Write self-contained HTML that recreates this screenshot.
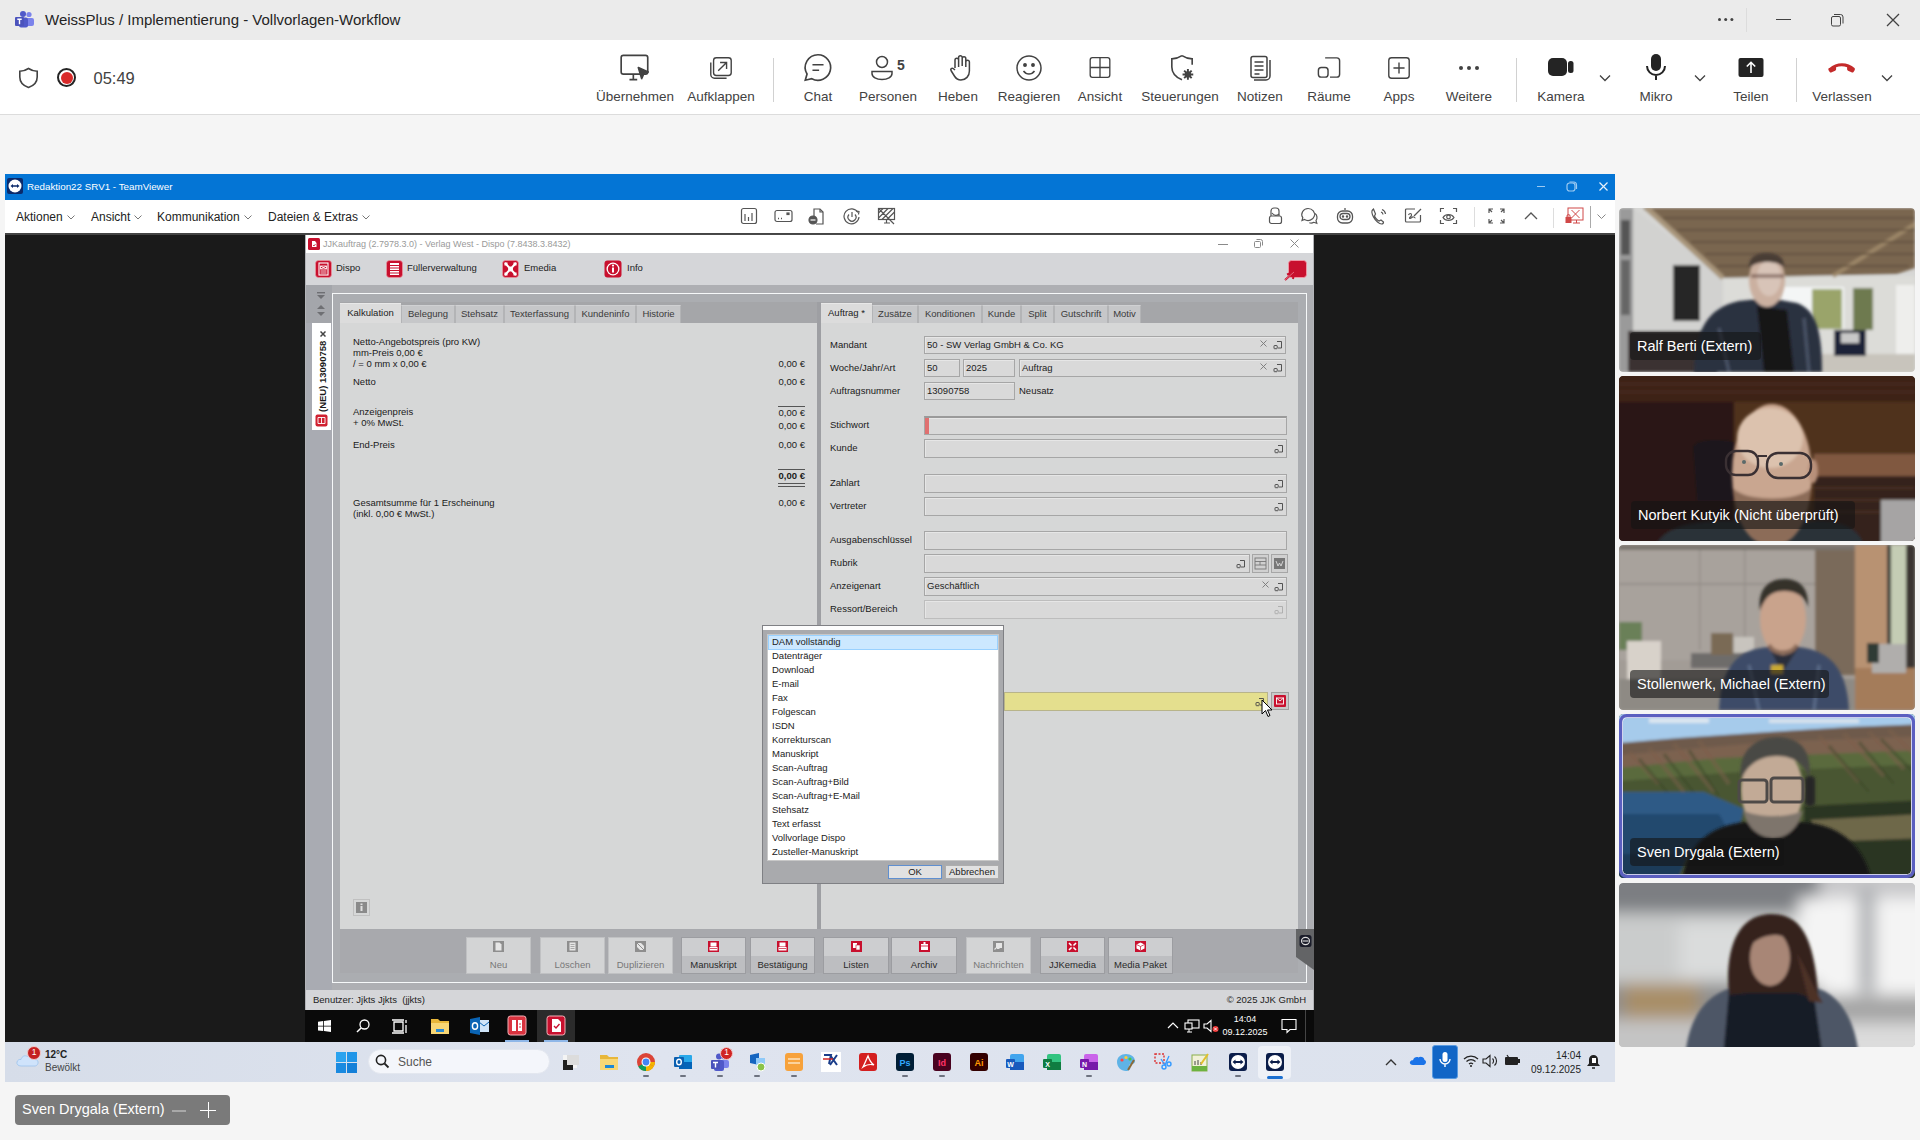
<!DOCTYPE html>
<html><head><meta charset="utf-8">
<style>
*{box-sizing:border-box;margin:0;padding:0}
html,body{width:1920px;height:1140px;overflow:hidden;background:#f5f5f5;font-family:"Liberation Sans",sans-serif;}
.a{position:absolute}
.tlab{position:absolute;top:88.5px;font-size:13.5px;color:#424242;white-space:nowrap;transform:translateX(-50%)}
.ticon{position:absolute;top:53px;width:28px;height:28px;transform:translateX(-50%)}
.ticon.big{top:52px;width:31px;height:31px}
.tsep{position:absolute;top:58px;width:1px;height:44px;background:#d1d1d1}
.tvm{top:210px;font-size:12px;color:#222;white-space:nowrap}
.at{white-space:nowrap;line-height:1.15}
.tname2{font-size:14.5px;color:#fff;white-space:nowrap;line-height:18px}
</style></head><body>
<!--TEAMS-->
<!-- TEAMS TITLE BAR -->
<div class="a" style="left:0;top:0;width:1920px;height:40px;background:#ebebeb"></div>
<svg class="a" style="left:15px;top:11px" width="20" height="18" viewBox="0 0 20 18">
 <circle cx="14" cy="3.5" r="2.6" fill="#7b83eb"/><rect x="11" y="7" width="8" height="8" rx="2" fill="#7b83eb"/>
 <circle cx="8" cy="3" r="3" fill="#5059c9"/><rect x="4" y="6.5" width="9" height="10" rx="2" fill="#5059c9"/>
 <rect x="0" y="6" width="9" height="9" rx="1" fill="#4b53bc"/><path d="M2.3 8.2h4.4M4.5 8.2v5" stroke="#fff" stroke-width="1.4"/>
</svg>
<div class="a" style="left:45px;top:11px;font-size:15px;color:#242424;white-space:nowrap">WeissPlus / Implementierung - Vollvorlagen-Workflow</div>
<div class="a" style="left:1717.5px;top:18px;width:3.2px;height:3.2px;border-radius:2px;background:#424242;box-shadow:6.2px 0 #424242,12.4px 0 #424242"></div>
<div class="a" style="left:1746px;top:8px;width:1px;height:24px;background:#dcdcdc"></div>
<div class="a" style="left:1776px;top:19px;width:15px;height:1px;background:#424242"></div>
<svg class="a" style="left:1831px;top:14px" width="13" height="13" viewBox="0 0 13 13"><rect x="0.5" y="2.5" width="9" height="9.5" rx="1.5" fill="none" stroke="#424242"/><path d="M3 0.5h6.5a2.5 2.5 0 0 1 2.5 2.5v6.5" fill="none" stroke="#424242"/></svg>
<svg class="a" style="left:1886px;top:13px" width="14" height="14" viewBox="0 0 14 14"><path d="M1 1L13 13M13 1L1 13" stroke="#424242" stroke-width="1.3"/></svg>

<!-- TEAMS TOOLBAR -->
<div class="a" style="left:0;top:40px;width:1920px;height:75px;background:#fff;border-bottom:1px solid #dcdcdc"></div>
<svg class="a" style="left:18px;top:67px" width="21" height="22" viewBox="0 0 21 22"><path d="M10.5 1.5C7.5 3.5 5 4.3 1.8 4.3V10c0 5.2 3.4 8.7 8.7 10.5 5.3-1.8 8.7-5.3 8.7-10.5V4.3C16 4.3 13.5 3.5 10.5 1.5z" fill="none" stroke="#424242" stroke-width="1.6"/></svg>
<div class="a" style="left:57px;top:68px;width:19px;height:19px;border-radius:50%;border:2px solid #242424"></div>
<div class="a" style="left:60.5px;top:71.5px;width:12px;height:12px;border-radius:50%;background:#d92a2a"></div>
<div class="a" style="left:93.5px;top:69px;font-size:16.5px;color:#424242">05:49</div>

<div class="tsep" style="left:773px"></div>
<div class="tsep" style="left:1516px"></div>
<div class="tsep" style="left:1796px"></div>

<svg class="ticon" style="left:635px;top:52.0px;width:31px;height:31px" viewBox="0 0 28 28" fill="none" stroke="#424242" stroke-width="1.5"><rect x="1.5" y="3" width="24" height="17" rx="2"/><path d="M9 25h7M12.5 20v5"/><path d="M17 14l9 4-4 1.5L20 24z" fill="#424242" stroke-linejoin="round"/></svg>
<svg class="ticon" style="left:721px;top:54.5px;width:26px;height:26px" viewBox="0 0 28 28" fill="none" stroke="#424242" stroke-width="1.5"><rect x="6" y="3" width="19" height="19" rx="3"/><path d="M3 8v13a4 4 0 0 0 4 4h13"/><path d="M11 17l9-9M13 8h7v7"/></svg>
<svg class="ticon" style="left:818px;top:52.0px;width:31px;height:31px" viewBox="0 0 28 28" fill="none" stroke="#424242" stroke-width="1.5"><path d="M14 2.5a11.5 11.5 0 1 1-5.6 21.6L2.5 25.5l1.6-5.6A11.5 11.5 0 0 1 14 2.5z"/><path d="M9 11.5h10M9 16.5h6"/></svg>
<svg class="ticon" style="left:882px;top:53.5px;width:28px;height:28px" viewBox="0 0 28 28" fill="none" stroke="#424242" stroke-width="1.5"><circle cx="14" cy="8" r="5.5"/><path d="M4 17.5h20v2c0 3.5-4.5 6-10 6s-10-2.5-10-6z"/></svg>
<div class="a" style="left:897px;top:57px;font-size:14px;font-weight:bold;color:#424242">5</div>
<svg class="ticon" style="left:960.5px;top:53.5px;width:28px;height:28px" viewBox="0 0 28 28" fill="none" stroke="#424242" stroke-width="1.5" stroke-linejoin="round"><path d="M8 14V6a1.8 1.8 0 0 1 3.6 0v7M11.6 12V3.5a1.8 1.8 0 0 1 3.6 0V12M15.2 12V4.5a1.8 1.8 0 0 1 3.6 0V13M18.8 13V8a1.8 1.8 0 0 1 3.6 0v9c0 5-3.5 9-8.5 9-3 0-5-1.5-6.5-4L4 16.5c-.8-1.3.8-3 2.2-2l1.8 1.5"/></svg>
<svg class="ticon" style="left:1029px;top:53.5px;width:28px;height:28px" viewBox="0 0 28 28" fill="none" stroke="#424242" stroke-width="1.5"><circle cx="14" cy="14" r="12"/><circle cx="10" cy="11" r="1.2" fill="#424242"/><circle cx="18" cy="11" r="1.2" fill="#424242"/><path d="M8.5 17c1.5 2 3.3 3 5.5 3s4-1 5.5-3"/></svg>
<svg class="ticon" style="left:1100px;top:55.0px;width:25px;height:25px" viewBox="0 0 28 28" fill="none" stroke="#424242" stroke-width="1.5"><rect x="3" y="3" width="22" height="22" rx="2.5"/><path d="M14 3v22M3 14h22"/></svg>
<svg class="ticon" style="left:1181.5px;top:52.5px;width:30px;height:30px" viewBox="0 0 28 28" fill="none" stroke="#424242" stroke-width="1.5"><path d="M14 2.5C11 4.5 8 5.5 4.5 5.5V13c0 5.5 3.5 9.5 9.5 12"/><path d="M14 2.5c3 2 6 3 9.5 3V11"/><circle cx="19.5" cy="20" r="2.2" fill="#424242"/><path d="M19.5 15v10M14.5 20h10M16 16.5l7 7M23 16.5l-7 7" stroke-width="1.8"/></svg>
<svg class="ticon" style="left:1260px;top:53.5px;width:28px;height:28px" viewBox="0 0 28 28" fill="none" stroke="#424242" stroke-width="1.5"><rect x="5" y="2.5" width="16" height="21" rx="2"/><path d="M8.5 8h9M8.5 12h9M8.5 16h9M8.5 20h5"/><path d="M24 6v16a4 4 0 0 1-4 4H8"/></svg>
<svg class="ticon" style="left:1329px;top:54.0px;width:27px;height:27px" viewBox="0 0 28 28" fill="none" stroke="#424242" stroke-width="1.5"><path d="M10 4h12a3 3 0 0 1 3 3v14a3 3 0 0 1-3 3h-7"/><rect x="3" y="14" width="10" height="10" rx="3"/></svg>
<svg class="ticon" style="left:1399px;top:54.5px;width:26px;height:26px" viewBox="0 0 28 28" fill="none" stroke="#424242" stroke-width="1.5"><rect x="3" y="3" width="22" height="22" rx="3"/><path d="M14 8v12M8 14h12"/></svg>
<div class="a" style="left:1459px;top:66px;width:4px;height:4px;border-radius:50%;background:#424242;box-shadow:8px 0 #424242,16px 0 #424242"></div>
<svg class="ticon" style="left:1561px" viewBox="0 0 28 28"><rect x="1" y="5" width="19" height="18" rx="5" fill="#242424"/><rect x="21" y="8" width="5.5" height="12" rx="2.5" fill="#242424"/></svg>
<svg class="a" style="left:1599px;top:74px" width="12" height="8" viewBox="0 0 12 8"><path d="M1 1.5l5 5 5-5" fill="none" stroke="#424242" stroke-width="1.3"/></svg>
<svg class="ticon" style="left:1656px" viewBox="0 0 28 28"><rect x="9" y="1" width="10" height="17" rx="5" fill="#242424"/><path d="M5 13a9 9 0 0 0 18 0M14 22v5" fill="none" stroke="#242424" stroke-width="2"/></svg>
<svg class="a" style="left:1694px;top:74px" width="12" height="8" viewBox="0 0 12 8"><path d="M1 1.5l5 5 5-5" fill="none" stroke="#424242" stroke-width="1.3"/></svg>
<svg class="ticon" style="left:1751px" viewBox="0 0 28 28"><rect x="1.5" y="5" width="25" height="19" rx="2" fill="#242424"/><path d="M14 20V9.5M9.8 13.5L14 9.3 18.2 13.5" fill="none" stroke="#fff" stroke-width="1.6"/></svg>
<svg class="ticon" style="left:1842px" viewBox="0 0 28 28"><path d="M1.5 15c6.5-6.5 18.5-6.5 25 0 .5.5.5 1.5 0 2.5l-1 1.5c-.5.6-1.3.7-2 .3l-3.5-1.6c-.6-.3-.9-.8-.9-1.4v-2c-3.5-1.3-7.5-1.3-11 0v2c0 .6-.3 1.1-.9 1.4L3.7 19.3c-.7.4-1.5.3-2-.3l-1-1.5c-.5-1-.5-2 .3-2.5z" fill="#c42b2b"/></svg>
<svg class="a" style="left:1881px;top:74px" width="12" height="8" viewBox="0 0 12 8"><path d="M1 1.5l5 5 5-5" fill="none" stroke="#424242" stroke-width="1.3"/></svg>

<div class="tlab" style="left:635px">Übernehmen</div>
<div class="tlab" style="left:721px">Aufklappen</div>
<div class="tlab" style="left:818px">Chat</div>
<div class="tlab" style="left:888px">Personen</div>
<div class="tlab" style="left:958px">Heben</div>
<div class="tlab" style="left:1029px">Reagieren</div>
<div class="tlab" style="left:1100px">Ansicht</div>
<div class="tlab" style="left:1180px">Steuerungen</div>
<div class="tlab" style="left:1260px">Notizen</div>
<div class="tlab" style="left:1329px">Räume</div>
<div class="tlab" style="left:1399px">Apps</div>
<div class="tlab" style="left:1469px">Weitere</div>
<div class="tlab" style="left:1561px">Kamera</div>
<div class="tlab" style="left:1656px">Mikro</div>
<div class="tlab" style="left:1751px">Teilen</div>
<div class="tlab" style="left:1842px">Verlassen</div>
<!--/TEAMS-->
<!--TV-->
<!-- TEAMVIEWER -->
<div class="a" style="left:5px;top:174px;width:1610px;height:868px;background:#1a1a1a"></div>
<div class="a" style="left:5px;top:174px;width:1610px;height:26px;background:#0475d5"></div>
<div class="a" style="left:7px;top:178px;width:16px;height:16px;background:#0b2a6b;border-radius:2px"></div>
<svg class="a" style="left:8px;top:179px" width="14" height="14" viewBox="0 0 14 14"><circle cx="7" cy="7" r="6.5" fill="#fff"/><path d="M2.5 7l2.5-2v1.2h4V5l2.5 2-2.5 2V7.8h-4V9z" fill="#0b2a6b"/></svg>
<div class="a" style="left:27px;top:180.5px;font-size:9.8px;color:#fff;white-space:nowrap">Redaktion22 SRV1 - TeamViewer</div>
<div class="a" style="left:1537px;top:186px;width:8px;height:1px;background:#9ccaf2"></div>
<svg class="a" style="left:1566px;top:181px" width="12" height="11" viewBox="0 0 12 11"><rect x="1" y="2" width="8" height="8" rx="2.5" fill="none" stroke="#9ccaf2" stroke-width="1.2"/><path d="M3.5 1h4a3 3 0 0 1 3 3v4" fill="none" stroke="#9ccaf2" stroke-width="1.2"/></svg>
<svg class="a" style="left:1599px;top:182px" width="9" height="9" viewBox="0 0 9 9"><path d="M0.5 0.5l8 8M8.5 0.5l-8 8" stroke="#e6f1fb" stroke-width="1.2"/></svg>

<div class="a" style="left:5px;top:200px;width:1610px;height:34px;background:#fff"></div>
<div class="a" style="left:5px;top:233px;width:1610px;height:2px;background:#444"></div>
<div class="a tvm" style="left:16px">Aktionen</div>
<div class="a tvm" style="left:91px">Ansicht</div>
<div class="a tvm" style="left:157px">Kommunikation</div>
<div class="a tvm" style="left:268px">Dateien &amp; Extras</div>
<svg class="a" style="left:67px;top:215px" width="8" height="5" viewBox="0 0 8 5"><path d="M0.5 0.5l3.5 3.5 3.5-3.5" fill="none" stroke="#777"/></svg>
<svg class="a" style="left:134px;top:215px" width="8" height="5" viewBox="0 0 8 5"><path d="M0.5 0.5l3.5 3.5 3.5-3.5" fill="none" stroke="#777"/></svg>
<svg class="a" style="left:244px;top:215px" width="8" height="5" viewBox="0 0 8 5"><path d="M0.5 0.5l3.5 3.5 3.5-3.5" fill="none" stroke="#777"/></svg>
<svg class="a" style="left:362px;top:215px" width="8" height="5" viewBox="0 0 8 5"><path d="M0.5 0.5l3.5 3.5 3.5-3.5" fill="none" stroke="#777"/></svg>

<svg class="a" style="left:740px;top:207px" width="18" height="18" viewBox="0 0 18 18" fill="none" stroke="#555" stroke-width="1.2"><rect x="1.5" y="1.5" width="15" height="15" rx="2"/><path d="M5 7v7M8.5 10v4M12 6v8"/></svg>
<svg class="a" style="left:774px;top:209px" width="19" height="14" viewBox="0 0 19 14" fill="none" stroke="#555" stroke-width="1.2"><rect x="1" y="1.5" width="17" height="11" rx="2"/><path d="M4 9.5h1M7 9.5h1" stroke-width="1.5"/><rect x="13" y="4" width="2" height="1.5" fill="#555"/></svg>
<svg class="a" style="left:807px;top:207px" width="18" height="18" viewBox="0 0 18 18" fill="none" stroke="#555" stroke-width="1.2"><path d="M7 10V2h6l3 3v12H9"/><path d="M13 2v3h3"/><circle cx="6" cy="13" r="4" fill="#555"/><path d="M3.5 13h5" stroke="#fff"/></svg>
<svg class="a" style="left:843px;top:207px" width="18" height="18" viewBox="0 0 18 18" fill="none" stroke="#555" stroke-width="1.2"><path d="M15 5.5A7.5 7.5 0 1 0 16 10"/><path d="M13 4l3 .5-.5 3"/><path d="M6 7.5a4 4 0 1 0 6 0M9 5v5"/></svg>
<svg class="a" style="left:877px;top:207px" width="19" height="18" viewBox="0 0 19 18" fill="none" stroke="#555" stroke-width="1.2"><rect x="1.5" y="1.5" width="16" height="11"/><path d="M1.5 6l4.5-4.5M1.5 11l9.5-9.5M5 12.5l11-11M10 12.5l7.5-7.5M2 2l15 15M7 16h6M9.5 12.5v3.5"/></svg>

<svg class="a" style="left:1268px;top:207px" width="15" height="18" viewBox="0 0 15 18" fill="none" stroke="#555" stroke-width="1.2"><path d="M3 9V4a3 3 0 0 1 3-3h2a3 3 0 0 1 3 3v5"/><rect x="1.5" y="9" width="12" height="7.5" rx="2"/><path d="M4 6c2 3 5 3 7 1"/></svg>
<svg class="a" style="left:1300px;top:207px" width="19" height="18" viewBox="0 0 19 18" fill="none" stroke="#555" stroke-width="1.2"><path d="M8 1.5a6.5 6 0 1 1-3.5 11L2 13.5l.8-2.8A6.5 6 0 0 1 8 1.5z"/><path d="M15 6.5a5 5 0 0 1 1 7l.8 2.8-3-1a5 5 0 0 1-4.5.5"/></svg>
<svg class="a" style="left:1336px;top:207px" width="18" height="18" viewBox="0 0 18 18" fill="none" stroke="#555" stroke-width="1.3"><rect x="1.5" y="4" width="15" height="12" rx="5"/><rect x="4" y="6.5" width="10" height="6" rx="3"/><path d="M9 1v2"/><circle cx="7" cy="9.5" r=".6" fill="#555"/><circle cx="11" cy="9.5" r=".6" fill="#555"/></svg>
<svg class="a" style="left:1370px;top:207px" width="18" height="18" viewBox="0 0 18 18" fill="none" stroke="#555" stroke-width="1.2"><path d="M2.5 3c-1 1-1 3 1 7s6 7 8 7c1 0 2-1 2-2l-2.5-2-2 1c-1.5-.5-4-3.5-4.5-5l1-2L3.5 2z"/><path d="M11 5a3 3 0 0 1 2 2.5M12 2.5a5.5 5.5 0 0 1 3.5 4.5"/></svg>
<svg class="a" style="left:1404px;top:207px" width="19" height="17" viewBox="0 0 19 17" fill="none" stroke="#555" stroke-width="1.2"><path d="M11 2H2.5a1 1 0 0 0-1 1v11a1 1 0 0 0 1 1h13a1 1 0 0 0 1-1V8"/><path d="M4.5 8c1-2 3-2 3 0s-2 2-2 3 2 0 3-1 2 1 3 1"/><path d="M10 9l7-7"/></svg>
<svg class="a" style="left:1439px;top:207px" width="19" height="18" viewBox="0 0 19 18" fill="none" stroke="#555" stroke-width="1.2"><path d="M1.5 5V1.5H5M14 1.5h3.5V5M1.5 13v3.5H5M14 16.5h3.5V13"/><path d="M4 10.5c2.5-4 8.5-4 11 0-2.5 4-8.5 4-11 0z"/><circle cx="9.5" cy="10" r="1.8"/></svg>
<div class="a" style="left:1474px;top:207px;width:1px;height:20px;background:#ddd"></div>
<svg class="a" style="left:1488px;top:208px" width="17" height="16" viewBox="0 0 17 16" fill="none" stroke="#555" stroke-width="1.2"><path d="M1 5V1h4M12 1h4v4M1 11v4h4M12 15h4v-4M1 1l3 3M16 1l-3 3M1 15l3-3M16 15l-3-3"/></svg>
<svg class="a" style="left:1524px;top:211px" width="14" height="9" viewBox="0 0 14 9"><path d="M1 8l6-6 6 6" fill="none" stroke="#555" stroke-width="1.3"/></svg>
<div class="a" style="left:1553px;top:208px;width:1px;height:20px;background:#ddd"></div>
<svg class="a" style="left:1565px;top:207px" width="19" height="19" viewBox="0 0 19 19" fill="none" stroke="#d04848" stroke-width="1"><rect x="3" y="1" width="15" height="12"/><path d="M6.5 3l8 8M14.5 3l-8 8M8 16h7M11.5 13v3"/><rect x="1" y="10.5" width="5" height="5" fill="#d04848"/><path d="M2 10.5V9a1.5 1.5 0 0 1 3 0v1.5"/></svg>
<div class="a" style="left:1590px;top:206px;width:1px;height:22px;background:#aaa"></div>
<svg class="a" style="left:1597px;top:214px" width="9" height="6" viewBox="0 0 9 6"><path d="M0.5 0.5l4 4 4-4" fill="none" stroke="#888"/></svg>
<!--/TV-->
<!--APP-->
<div class="a" style="left:305px;top:234px;width:1009px;height:808px;background:#b3b4b8"></div>
<div class="a" style="left:305px;top:234px;width:1009px;height:1px;background:#4a4a4a"></div>
<div class="a" style="left:306px;top:235px;width:1007px;height:18px;background:#fff"></div>
<svg class="a" style="left:308px;top:238px" width="12" height="12" viewBox="0 0 12 12"><rect width="12" height="12" rx="1.5" fill="#c8102e"/><path d="M4 3v6h4.5V5L7 3z" fill="#fff"/><path d="M5 7l1 1 1.5-2" stroke="#c8102e" stroke-width=".8" fill="none"/></svg>
<div class="a at" style="left:323px;top:239px;font-size:9px;color:#9a9a9a">JJKauftrag (2.7978.3.0) - Verlag West - Dispo (7.8438.3.8432)</div>
<div class="a" style="left:1218px;top:244px;width:10px;height:1px;background:#8a8a8a"></div>
<svg class="a" style="left:1254px;top:239px" width="9" height="9" viewBox="0 0 9 9" fill="none" stroke="#8a8a8a"><rect x=".5" y="2.5" width="6" height="6" rx="1"/><path d="M2.5.5h4a2 2 0 0 1 2 2v4"/></svg>
<svg class="a" style="left:1290px;top:239px" width="9" height="9" viewBox="0 0 9 9"><path d="M.5.5l8 8M8.5.5l-8 8" stroke="#8a8a8a"/></svg>
<div class="a" style="left:306px;top:253px;width:1007px;height:32px;background:#d5d6d9"></div>
<svg class="a" style="left:315px;top:260px" width="17" height="18" viewBox="0 0 17 18"><rect x=".5" y=".5" width="16" height="17" rx="3" fill="#c8102e" stroke="#f0a0a8" stroke-width=".6"/><rect x="4" y="3" width="9" height="12" fill="none" stroke="#fff" stroke-width="1.1"/><path d="M5.5 6h6v3h-6zM5.5 6l6 3M11.5 6l-6 3M5.5 11h6M5.5 13h6" stroke="#fff" stroke-width=".8" fill="none"/></svg>
<div class="a at" style="left:336px;top:263px;font-size:9.5px;color:#222">Dispo</div>
<svg class="a" style="left:386px;top:260px" width="17" height="18" viewBox="0 0 17 18"><rect x=".5" y=".5" width="16" height="17" rx="3" fill="#c8102e" stroke="#f0a0a8" stroke-width=".6"/><rect x="4" y="3" width="9" height="12" fill="#fff"/><path d="M4 5.5h9M4 8h9M4 10.5h9M4 13h9" stroke="#c8102e" stroke-width="1"/></svg>
<div class="a at" style="left:407px;top:263px;font-size:9.5px;color:#222">Füllerverwaltung</div>
<svg class="a" style="left:502px;top:260px" width="17" height="18" viewBox="0 0 17 18"><rect x=".5" y=".5" width="16" height="17" rx="3" fill="#c8102e" stroke="#f0a0a8" stroke-width=".6"/><path d="M3 3l11 12M14 3L3 15" stroke="#fff" stroke-width="2"/><circle cx="8.5" cy="9" r="2.5" fill="#fff"/><rect x="2.5" y="2.5" width="3" height="3" fill="#fff"/><rect x="11.5" y="2.5" width="3" height="3" fill="#fff"/><rect x="2.5" y="12.5" width="3" height="3" fill="#fff"/><rect x="11.5" y="12.5" width="3" height="3" fill="#fff"/></svg>
<div class="a at" style="left:524px;top:263px;font-size:9.5px;color:#222">Emedia</div>
<svg class="a" style="left:604px;top:260px" width="18" height="18" viewBox="0 0 18 18"><rect x=".5" y=".5" width="17" height="17" rx="3" fill="#c8102e"/><circle cx="9" cy="9" r="6.5" fill="#fff"/><circle cx="9" cy="9" r="5.2" fill="#c8102e"/><circle cx="9" cy="5.6" r="1.1" fill="#fff"/><rect x="8" y="7.5" width="2" height="5" fill="#fff"/></svg>
<div class="a at" style="left:627px;top:263px;font-size:9.5px;color:#222">Info</div>
<svg class="a" style="left:1284px;top:259px" width="24" height="22" viewBox="0 0 24 22"><rect x="4.5" y="1.5" width="18" height="17" rx="3" fill="#c8102e" stroke="#f6a0ac" stroke-width=".8"/><path d="M1 21l9-8M3 15.5l7-2.5-1 7" stroke="#c8102e" stroke-width="2" fill="none"/><path d="M1 21l9-8" stroke="#f6a0ac" stroke-width=".6"/></svg>
<div class="a" style="left:306px;top:285px;width:1007px;height:725px;background:#aeafb3"></div>
<div class="a" style="left:306px;top:285px;width:26px;height:705px;background:#a9abb2"></div>
<div class="a" style="left:306px;top:285px;width:26px;height:38px;background:#a4a6ab"></div>
<svg class="a" style="left:316px;top:292px" width="10" height="28" viewBox="0 0 10 28" fill="#6e6f73"><rect x="1" y="0" width="8" height="1.4"/><path d="M1 3h8l-4 4z"/><path d="M1 17h8l-4-4z"/><path d="M1 20h8l-4 4z"/></svg>
<div class="a" style="left:312px;top:323px;width:19px;height:107px;background:#fff"></div>
<div class="a" style="left:314px;top:428px;width:100px;height:18px;transform-origin:0 0;transform:rotate(-90deg);font-size:9.5px;font-weight:bold;color:#1a1a1a;white-space:nowrap;line-height:18px;padding-left:16px">(NEU) 13090758</div>
<svg class="a" style="left:320px;top:331px" width="6" height="6" viewBox="0 0 6 6"><path d="M.5.5l5 5M5.5.5l-5 5" stroke="#444" stroke-width="1.5"/></svg>
<svg class="a" style="left:315px;top:414px" width="13" height="13" viewBox="0 0 13 13"><rect x=".5" y=".5" width="12" height="12" rx="2" fill="#d02030"/><path d="M3 3.5h7v6H3zM6.5 3.5v6" stroke="#fff" stroke-width=".9" fill="none"/></svg>
<div class="a" style="left:332px;top:293px;width:975px;height:690px;background:#abadb1;border:1.5px solid #f6f8f9"></div>
<div class="a" style="left:340px;top:302px;width:477px;height:21px;background:#a5a6a9"></div>
<div class="a" style="left:817px;top:302px;width:4px;height:627px;background:#9e9fa3"></div>
<div class="a" style="left:821px;top:302px;width:477px;height:21px;background:#a5a6a9"></div>
<div class="a" style="left:340px;top:323px;width:477px;height:606px;background:#d6d7d7"></div>
<div class="a" style="left:821px;top:323px;width:477px;height:606px;background:#d6d7d7"></div>
<div class="a" style="left:340px;top:303px;width:61px;height:20px;background:#dcdcdc;border-top:1px solid #e8e8e8"></div>
<div class="a at" style="left:340px;top:308px;width:61px;text-align:center;font-size:9.5px;color:#222">Kalkulation</div>
<div class="a" style="left:401px;top:305px;width:54px;height:18px;background:#c6c7c9;border-left:1px solid #b3b4b6;border-right:1px solid #b3b4b6;border-top:1px solid #d0d1d3"></div>
<div class="a at" style="left:401px;top:309px;width:54px;text-align:center;font-size:9.5px;color:#3a3a3a">Belegung</div>
<div class="a" style="left:455px;top:305px;width:49px;height:18px;background:#c6c7c9;border-left:1px solid #b3b4b6;border-right:1px solid #b3b4b6;border-top:1px solid #d0d1d3"></div>
<div class="a at" style="left:455px;top:309px;width:49px;text-align:center;font-size:9.5px;color:#3a3a3a">Stehsatz</div>
<div class="a" style="left:504px;top:305px;width:71px;height:18px;background:#c6c7c9;border-left:1px solid #b3b4b6;border-right:1px solid #b3b4b6;border-top:1px solid #d0d1d3"></div>
<div class="a at" style="left:504px;top:309px;width:71px;text-align:center;font-size:9.5px;color:#3a3a3a">Texterfassung</div>
<div class="a" style="left:575px;top:305px;width:61px;height:18px;background:#c6c7c9;border-left:1px solid #b3b4b6;border-right:1px solid #b3b4b6;border-top:1px solid #d0d1d3"></div>
<div class="a at" style="left:575px;top:309px;width:61px;text-align:center;font-size:9.5px;color:#3a3a3a">Kundeninfo</div>
<div class="a" style="left:636px;top:305px;width:45px;height:18px;background:#c6c7c9;border-left:1px solid #b3b4b6;border-right:1px solid #b3b4b6;border-top:1px solid #d0d1d3"></div>
<div class="a at" style="left:636px;top:309px;width:45px;text-align:center;font-size:9.5px;color:#3a3a3a">Historie</div>
<div class="a" style="left:821px;top:303px;width:51px;height:20px;background:#dcdcdc;border-top:1px solid #e8e8e8"></div>
<div class="a at" style="left:821px;top:308px;width:51px;text-align:center;font-size:9.5px;color:#222">Auftrag *</div>
<div class="a" style="left:872px;top:305px;width:46px;height:18px;background:#c6c7c9;border-left:1px solid #b3b4b6;border-right:1px solid #b3b4b6;border-top:1px solid #d0d1d3"></div>
<div class="a at" style="left:872px;top:309px;width:46px;text-align:center;font-size:9.5px;color:#3a3a3a">Zusätze</div>
<div class="a" style="left:918px;top:305px;width:64px;height:18px;background:#c6c7c9;border-left:1px solid #b3b4b6;border-right:1px solid #b3b4b6;border-top:1px solid #d0d1d3"></div>
<div class="a at" style="left:918px;top:309px;width:64px;text-align:center;font-size:9.5px;color:#3a3a3a">Konditionen</div>
<div class="a" style="left:982px;top:305px;width:39px;height:18px;background:#c6c7c9;border-left:1px solid #b3b4b6;border-right:1px solid #b3b4b6;border-top:1px solid #d0d1d3"></div>
<div class="a at" style="left:982px;top:309px;width:39px;text-align:center;font-size:9.5px;color:#3a3a3a">Kunde</div>
<div class="a" style="left:1021px;top:305px;width:33px;height:18px;background:#c6c7c9;border-left:1px solid #b3b4b6;border-right:1px solid #b3b4b6;border-top:1px solid #d0d1d3"></div>
<div class="a at" style="left:1021px;top:309px;width:33px;text-align:center;font-size:9.5px;color:#3a3a3a">Split</div>
<div class="a" style="left:1054px;top:305px;width:54px;height:18px;background:#c6c7c9;border-left:1px solid #b3b4b6;border-right:1px solid #b3b4b6;border-top:1px solid #d0d1d3"></div>
<div class="a at" style="left:1054px;top:309px;width:54px;text-align:center;font-size:9.5px;color:#3a3a3a">Gutschrift</div>
<div class="a" style="left:1108px;top:305px;width:33px;height:18px;background:#c6c7c9;border-left:1px solid #b3b4b6;border-right:1px solid #b3b4b6;border-top:1px solid #d0d1d3"></div>
<div class="a at" style="left:1108px;top:309px;width:33px;text-align:center;font-size:9.5px;color:#3a3a3a">Motiv</div>
<div class="a at" style="left:353px;top:336px;font-size:9.5px;color:#1a1a1a;line-height:11px">Netto-Angebotspreis (pro KW)<br>mm-Preis 0,00 €<br>/ = 0 mm x 0,00 €</div>
<div class="a at" style="left:353px;top:376px;font-size:9.5px;color:#1a1a1a;line-height:11px">Netto</div>
<div class="a at" style="left:353px;top:406px;font-size:9.5px;color:#1a1a1a;line-height:11px">Anzeigenpreis<br>+ 0% MwSt.</div>
<div class="a at" style="left:353px;top:439px;font-size:9.5px;color:#1a1a1a;line-height:11px">End-Preis</div>
<div class="a at" style="left:353px;top:497px;font-size:9.5px;color:#1a1a1a;line-height:11px">Gesamtsumme für 1 Erscheinung<br>(inkl. 0,00 € MwSt.)</div>
<div class="a at" style="left:740px;top:358px;width:65px;text-align:right;font-size:9.5px;color:#1a1a1a;line-height:11px">0,00 €</div>
<div class="a at" style="left:740px;top:376px;width:65px;text-align:right;font-size:9.5px;color:#1a1a1a;line-height:11px">0,00 €</div>
<div class="a at" style="left:740px;top:407px;width:65px;text-align:right;font-size:9.5px;color:#1a1a1a;line-height:11px">0,00 €</div>
<div class="a at" style="left:740px;top:420px;width:65px;text-align:right;font-size:9.5px;color:#1a1a1a;line-height:11px">0,00 €</div>
<div class="a at" style="left:740px;top:439px;width:65px;text-align:right;font-size:9.5px;color:#1a1a1a;line-height:11px">0,00 €</div>
<div class="a at" style="left:740px;top:470px;width:65px;text-align:right;font-size:9.5px;color:#1a1a1a;line-height:11px;font-weight:bold">0,00 €</div>
<div class="a at" style="left:740px;top:497px;width:65px;text-align:right;font-size:9.5px;color:#1a1a1a;line-height:11px">0,00 €</div>
<div class="a" style="left:778px;top:406px;width:27px;height:1px;background:#555"></div>
<div class="a" style="left:778px;top:469px;width:27px;height:1px;background:#555"></div>
<div class="a" style="left:778px;top:483px;width:27px;height:1px;background:#555"></div>
<div class="a" style="left:778px;top:486px;width:27px;height:1px;background:#555"></div>
<svg class="a" style="left:353px;top:899px" width="17" height="17" viewBox="0 0 17 17"><rect x=".5" y=".5" width="16" height="16" fill="none" stroke="#c0c0c0"/><rect x="3" y="3" width="11" height="11" fill="#8a8a8a"/><rect x="7.5" y="4.5" width="2" height="1.6" fill="#e0e0e0"/><rect x="7.5" y="7" width="2" height="5" fill="#e0e0e0"/></svg>
<div class="a at" style="left:830px;top:340px;font-size:9.5px;color:#1a1a1a">Mandant</div>
<div class="a at" style="left:830px;top:363px;font-size:9.5px;color:#1a1a1a">Woche/Jahr/Art</div>
<div class="a at" style="left:830px;top:386px;font-size:9.5px;color:#1a1a1a">Auftragsnummer</div>
<div class="a at" style="left:830px;top:420px;font-size:9.5px;color:#1a1a1a">Stichwort</div>
<div class="a at" style="left:830px;top:443px;font-size:9.5px;color:#1a1a1a">Kunde</div>
<div class="a at" style="left:830px;top:478px;font-size:9.5px;color:#1a1a1a">Zahlart</div>
<div class="a at" style="left:830px;top:501px;font-size:9.5px;color:#1a1a1a">Vertreter</div>
<div class="a at" style="left:830px;top:535px;font-size:9.5px;color:#1a1a1a">Ausgabenschlüssel</div>
<div class="a at" style="left:830px;top:558px;font-size:9.5px;color:#1a1a1a">Rubrik</div>
<div class="a at" style="left:830px;top:581px;font-size:9.5px;color:#1a1a1a">Anzeigenart</div>
<div class="a at" style="left:830px;top:604px;font-size:9.5px;color:#1a1a1a">Ressort/Bereich</div>
<div class="a" style="left:924px;top:336px;width:362px;height:18px;background:#d9d9d9;border:1px solid #a6a6a6;box-shadow:inset 1px 1px 0 #e6e6e6"></div>
<div class="a at" style="left:927px;top:340px;font-size:9.5px;color:#222">50 - SW Verlag GmbH &amp; Co. KG</div>
<svg class="a" style="left:1260px;top:340px" width="7" height="7" viewBox="0 0 7 7"><path d="M.5.5l6 6M6.5.5l-6 6" stroke="#777" stroke-width=".9"/></svg>
<svg class="a" style="left:1273px;top:340px" width="10" height="10" viewBox="0 0 10 10" fill="none" stroke="#444" stroke-width=".9"><path d="M4 1.5h4.5v6.5H5"/><rect x="1" y="5.5" width="3.2" height="3.2" rx=".5"/></svg>
<div class="a" style="left:924px;top:359px;width:36px;height:18px;background:#d9d9d9;border:1px solid #a6a6a6;box-shadow:inset 1px 1px 0 #e6e6e6"></div>
<div class="a at" style="left:927px;top:363px;font-size:9.5px;color:#222">50</div>
<div class="a" style="left:963px;top:359px;width:52px;height:18px;background:#d9d9d9;border:1px solid #a6a6a6;box-shadow:inset 1px 1px 0 #e6e6e6"></div>
<div class="a at" style="left:966px;top:363px;font-size:9.5px;color:#222">2025</div>
<div class="a" style="left:1019px;top:359px;width:267px;height:18px;background:#d9d9d9;border:1px solid #a6a6a6;box-shadow:inset 1px 1px 0 #e6e6e6"></div>
<div class="a at" style="left:1022px;top:363px;font-size:9.5px;color:#222">Auftrag</div>
<svg class="a" style="left:1260px;top:363px" width="7" height="7" viewBox="0 0 7 7"><path d="M.5.5l6 6M6.5.5l-6 6" stroke="#777" stroke-width=".9"/></svg>
<svg class="a" style="left:1273px;top:363px" width="10" height="10" viewBox="0 0 10 10" fill="none" stroke="#444" stroke-width=".9"><path d="M4 1.5h4.5v6.5H5"/><rect x="1" y="5.5" width="3.2" height="3.2" rx=".5"/></svg>
<div class="a" style="left:924px;top:382px;width:91px;height:18px;background:#d9d9d9;border:1px solid #a6a6a6;box-shadow:inset 1px 1px 0 #e6e6e6"></div>
<div class="a at" style="left:927px;top:386px;font-size:9.5px;color:#222">13090758</div>
<div class="a at" style="left:1019px;top:386px;font-size:9.5px;color:#1a1a1a">Neusatz</div>
<div class="a" style="left:924px;top:416px;width:363px;height:19px;background:#d9d9d9;border:1px solid #a6a6a6;box-shadow:inset 1px 1px 0 #e6e6e6;border-top:2px solid #9a9a9a"></div>
<div class="a" style="left:925px;top:418px;width:4px;height:16px;background:#e07070"></div>
<div class="a" style="left:924px;top:439px;width:363px;height:19px;background:#d9d9d9;border:1px solid #a6a6a6;box-shadow:inset 1px 1px 0 #e6e6e6"></div>
<svg class="a" style="left:1274px;top:444px" width="10" height="10" viewBox="0 0 10 10" fill="none" stroke="#444" stroke-width=".9"><path d="M4 1.5h4.5v6.5H5"/><rect x="1" y="5.5" width="3.2" height="3.2" rx=".5"/></svg>
<div class="a" style="left:924px;top:474px;width:363px;height:19px;background:#d9d9d9;border:1px solid #a6a6a6;box-shadow:inset 1px 1px 0 #e6e6e6"></div>
<svg class="a" style="left:1274px;top:479px" width="10" height="10" viewBox="0 0 10 10" fill="none" stroke="#444" stroke-width=".9"><path d="M4 1.5h4.5v6.5H5"/><rect x="1" y="5.5" width="3.2" height="3.2" rx=".5"/></svg>
<div class="a" style="left:924px;top:497px;width:363px;height:19px;background:#d9d9d9;border:1px solid #a6a6a6;box-shadow:inset 1px 1px 0 #e6e6e6"></div>
<svg class="a" style="left:1274px;top:502px" width="10" height="10" viewBox="0 0 10 10" fill="none" stroke="#444" stroke-width=".9"><path d="M4 1.5h4.5v6.5H5"/><rect x="1" y="5.5" width="3.2" height="3.2" rx=".5"/></svg>
<div class="a" style="left:924px;top:531px;width:363px;height:19px;background:#d9d9d9;border:1px solid #a6a6a6;box-shadow:inset 1px 1px 0 #e6e6e6"></div>
<div class="a" style="left:924px;top:554px;width:326px;height:19px;background:#d9d9d9;border:1px solid #a6a6a6;box-shadow:inset 1px 1px 0 #e6e6e6"></div>
<svg class="a" style="left:1236px;top:559px" width="10" height="10" viewBox="0 0 10 10" fill="none" stroke="#444" stroke-width=".9"><path d="M4 1.5h4.5v6.5H5"/><rect x="1" y="5.5" width="3.2" height="3.2" rx=".5"/></svg>
<div class="a" style="left:1252px;top:554px;width:17px;height:19px;background:#d0d0d0;border:1px solid #a6a6a6"></div>
<svg class="a" style="left:1254px;top:557px" width="13" height="13" viewBox="0 0 13 13" fill="none" stroke="#777" stroke-width=".9"><rect x="1" y="1" width="11" height="11"/><path d="M1 4.5h11M1 8h11M6 4.5v3.5"/></svg>
<div class="a" style="left:1271px;top:554px;width:17px;height:19px;background:#d0d0d0;border:1px solid #a6a6a6"></div>
<svg class="a" style="left:1273px;top:557px" width="13" height="13" viewBox="0 0 13 13"><rect x="1" y="1" width="11" height="11" fill="#777"/><path d="M3 4l2 5 1.5-3 1.5 3 2-5" stroke="#ddd" fill="none" stroke-width=".9"/></svg>
<div class="a" style="left:924px;top:577px;width:363px;height:19px;background:#d9d9d9;border:1px solid #a6a6a6;box-shadow:inset 1px 1px 0 #e6e6e6"></div>
<div class="a at" style="left:927px;top:581px;font-size:9.5px;color:#222">Geschäftlich</div>
<svg class="a" style="left:1262px;top:581px" width="7" height="7" viewBox="0 0 7 7"><path d="M.5.5l6 6M6.5.5l-6 6" stroke="#777" stroke-width=".9"/></svg>
<svg class="a" style="left:1274px;top:582px" width="10" height="10" viewBox="0 0 10 10" fill="none" stroke="#444" stroke-width=".9"><path d="M4 1.5h4.5v6.5H5"/><rect x="1" y="5.5" width="3.2" height="3.2" rx=".5"/></svg>
<div class="a" style="left:924px;top:600px;width:363px;height:19px;background:#d9d9d9;border:1px solid #a6a6a6;box-shadow:inset 1px 1px 0 #e6e6e6;border-color:#bdbdbd"></div>
<svg class="a" style="left:1274px;top:605px" width="10" height="10" viewBox="0 0 10 10" fill="none" stroke="#aaa" stroke-width=".9"><path d="M4 1.5h4.5v6.5H5"/><rect x="1" y="5.5" width="3.2" height="3.2" rx=".5"/></svg>
<div class="a" style="left:1004px;top:692px;width:264px;height:19px;background:#e4df8e;border:1px solid #b8b48a"></div>
<div class="a" style="left:1271px;top:692px;width:18px;height:18px;background:#c9c9c9;border:1px solid #a0a0a0"></div>
<svg class="a" style="left:1273px;top:694px" width="14" height="14" viewBox="0 0 14 14"><rect x="1" y="1" width="12" height="12" rx="1" fill="#c8102e"/><rect x="3.5" y="4" width="7" height="6" fill="none" stroke="#fff" stroke-width=".9"/><path d="M3.5 4l3.5 3 3.5-3" stroke="#fff" stroke-width=".9" fill="none"/></svg>
<svg class="a" style="left:1255px;top:697px" width="10" height="10" viewBox="0 0 10 10" fill="none" stroke="#444" stroke-width=".9"><path d="M4 1.5h4.5v6.5H5"/><rect x="1" y="5.5" width="3.2" height="3.2" rx=".5"/></svg>
<svg class="a" style="left:1261px;top:699px" width="12" height="19" viewBox="0 0 12 19"><path d="M1 1v14l3.5-3.5 2.5 6 2-1-2.5-5.5H11z" fill="#fff" stroke="#000" stroke-width="1"/></svg>
<div class="a" style="left:762px;top:625px;width:242px;height:259px;background:#a9aaad;border:1px solid #7f8084"></div>
<div class="a" style="left:763px;top:626px;width:240px;height:4px;background:#fdfdfd"></div>
<div class="a" style="left:767px;top:634px;width:232px;height:227px;background:#fff;border:1px solid #c8c8c8"></div>
<div class="a" style="left:768px;top:635px;width:230px;height:15px;background:#cce8ff;border:1px solid #99d1ff"></div>
<div class="a at" style="left:772px;top:637px;font-size:9.5px;color:#222">DAM vollständig</div>
<div class="a at" style="left:772px;top:651px;font-size:9.5px;color:#222">Datenträger</div>
<div class="a at" style="left:772px;top:665px;font-size:9.5px;color:#222">Download</div>
<div class="a at" style="left:772px;top:679px;font-size:9.5px;color:#222">E-mail</div>
<div class="a at" style="left:772px;top:693px;font-size:9.5px;color:#222">Fax</div>
<div class="a at" style="left:772px;top:707px;font-size:9.5px;color:#222">Folgescan</div>
<div class="a at" style="left:772px;top:721px;font-size:9.5px;color:#222">ISDN</div>
<div class="a at" style="left:772px;top:735px;font-size:9.5px;color:#222">Korrekturscan</div>
<div class="a at" style="left:772px;top:749px;font-size:9.5px;color:#222">Manuskript</div>
<div class="a at" style="left:772px;top:763px;font-size:9.5px;color:#222">Scan-Auftrag</div>
<div class="a at" style="left:772px;top:777px;font-size:9.5px;color:#222">Scan-Auftrag+Bild</div>
<div class="a at" style="left:772px;top:791px;font-size:9.5px;color:#222">Scan-Auftrag+E-Mail</div>
<div class="a at" style="left:772px;top:805px;font-size:9.5px;color:#222">Stehsatz</div>
<div class="a at" style="left:772px;top:819px;font-size:9.5px;color:#222">Text erfasst</div>
<div class="a at" style="left:772px;top:833px;font-size:9.5px;color:#222">Vollvorlage Dispo</div>
<div class="a at" style="left:772px;top:847px;font-size:9.5px;color:#222">Zusteller-Manuskript</div>
<div class="a" style="left:888px;top:865px;width:54px;height:14px;background:#e1e1e1;border:1px solid #5f8fd0"></div>
<div class="a at" style="left:888px;top:867px;width:54px;text-align:center;font-size:9.5px;color:#222">OK</div>
<div class="a" style="left:945px;top:865px;width:54px;height:14px;background:#e1e1e1;border:1px solid #adadad"></div>
<div class="a at" style="left:945px;top:867px;width:54px;text-align:center;font-size:9.5px;color:#222">Abbrechen</div>
<div class="a" style="left:340px;top:929px;width:958px;height:44px;background:#a8a9ad"></div>
<div class="a" style="left:466px;top:937px;width:65px;height:37px;background:#d3d4d5;border:1px solid #c0c1c3"></div>
<svg class="a" style="left:492.0px;top:940px" width="13" height="13" viewBox="0 0 13 13"><rect x="1" y="1" width="11" height="11" fill="#8e8e8e"/><path d="M3.5 2.5h4l2 2v6h-6z" fill="#e6e6e6"/></svg>
<div class="a at" style="left:466px;top:959.5px;width:65px;text-align:center;font-size:9.5px;color:#777">Neu</div>
<div class="a" style="left:540px;top:937px;width:65px;height:37px;background:#d3d4d5;border:1px solid #c0c1c3"></div>
<svg class="a" style="left:566.0px;top:940px" width="13" height="13" viewBox="0 0 13 13"><rect x="1" y="1" width="11" height="11" fill="#8e8e8e"/><rect x="3.5" y="2.5" width="6" height="8" fill="#e6e6e6"/><path d="M4.5 4.5h4M4.5 6.5h4M4.5 8.5h4" stroke="#8e8e8e" stroke-width=".7"/></svg>
<div class="a at" style="left:540px;top:959.5px;width:65px;text-align:center;font-size:9.5px;color:#777">Löschen</div>
<div class="a" style="left:608px;top:937px;width:65px;height:37px;background:#d3d4d5;border:1px solid #c0c1c3"></div>
<svg class="a" style="left:634.0px;top:940px" width="13" height="13" viewBox="0 0 13 13"><rect x="1" y="1" width="11" height="11" fill="#8e8e8e"/><path d="M3 3h4l3 3v4H6L3 7z" fill="#e6e6e6"/><path d="M3 3l7 7" stroke="#8e8e8e"/></svg>
<div class="a at" style="left:608px;top:959.5px;width:65px;text-align:center;font-size:9.5px;color:#777">Duplizieren</div>
<div class="a" style="left:681px;top:937px;width:65px;height:37px;background:linear-gradient(#cdced0 0,#cdced0 50%,#bdbec1 50%,#bdbec1 100%);border:1px solid #9c9da1"></div>
<svg class="a" style="left:707.0px;top:940px" width="13" height="13" viewBox="0 0 13 13"><rect x="1" y="1" width="11" height="11" fill="#c8102e"/><path d="M3.5 2.5h6v4h-6z" fill="#fff"/><rect x="2.5" y="7" width="8" height="3.5" fill="#fff"/><path d="M3 8.5h7" stroke="#c8102e" stroke-width=".7"/></svg>
<div class="a at" style="left:681px;top:959.5px;width:65px;text-align:center;font-size:9.5px;color:#2a2a2a">Manuskript</div>
<div class="a" style="left:750px;top:937px;width:65px;height:37px;background:linear-gradient(#cdced0 0,#cdced0 50%,#bdbec1 50%,#bdbec1 100%);border:1px solid #9c9da1"></div>
<svg class="a" style="left:776.0px;top:940px" width="13" height="13" viewBox="0 0 13 13"><rect x="1" y="1" width="11" height="11" fill="#c8102e"/><path d="M3.5 2.5h6v4h-6z" fill="#fff"/><rect x="2.5" y="7" width="8" height="3.5" fill="#fff"/><path d="M3 8.5h7" stroke="#c8102e" stroke-width=".7"/></svg>
<div class="a at" style="left:750px;top:959.5px;width:65px;text-align:center;font-size:9.5px;color:#2a2a2a">Bestätigung</div>
<div class="a" style="left:823px;top:937px;width:66px;height:37px;background:linear-gradient(#cdced0 0,#cdced0 50%,#bdbec1 50%,#bdbec1 100%);border:1px solid #9c9da1"></div>
<svg class="a" style="left:849.5px;top:940px" width="13" height="13" viewBox="0 0 13 13"><rect x="1" y="1" width="11" height="11" fill="#c8102e"/><rect x="3" y="3" width="4" height="5" fill="#fff"/><rect x="6" y="5" width="4" height="5" fill="#fff" stroke="#c8102e" stroke-width=".6"/></svg>
<div class="a at" style="left:823px;top:959.5px;width:66px;text-align:center;font-size:9.5px;color:#2a2a2a">Listen</div>
<div class="a" style="left:891px;top:937px;width:66px;height:37px;background:linear-gradient(#cdced0 0,#cdced0 50%,#bdbec1 50%,#bdbec1 100%);border:1px solid #9c9da1"></div>
<svg class="a" style="left:917.5px;top:940px" width="13" height="13" viewBox="0 0 13 13"><rect x="1" y="1" width="11" height="11" fill="#c8102e"/><rect x="3" y="4" width="7" height="6" fill="#fff"/><path d="M3 6h7" stroke="#c8102e" stroke-width=".8"/><rect x="5.5" y="2" width="2" height="2" fill="#fff"/></svg>
<div class="a at" style="left:891px;top:959.5px;width:66px;text-align:center;font-size:9.5px;color:#2a2a2a">Archiv</div>
<div class="a" style="left:966px;top:937px;width:65px;height:37px;background:#d3d4d5;border:1px solid #c0c1c3"></div>
<svg class="a" style="left:992.0px;top:940px" width="13" height="13" viewBox="0 0 13 13"><rect x="1" y="1" width="11" height="11" fill="#8e8e8e"/><rect x="4" y="3" width="6" height="5" fill="#e6e6e6"/><path d="M2.5 9.5l3-3v2h2" stroke="#e6e6e6" fill="none" stroke-width="1.1"/></svg>
<div class="a at" style="left:966px;top:959.5px;width:65px;text-align:center;font-size:9.5px;color:#777">Nachrichten</div>
<div class="a" style="left:1040px;top:937px;width:65px;height:37px;background:linear-gradient(#cdced0 0,#cdced0 50%,#bdbec1 50%,#bdbec1 100%);border:1px solid #9c9da1"></div>
<svg class="a" style="left:1066.0px;top:940px" width="13" height="13" viewBox="0 0 13 13"><rect x="1" y="1" width="11" height="11" fill="#c8102e"/><path d="M3 3l7 7M10 3l-7 7" stroke="#fff" stroke-width="1.6"/><circle cx="6.5" cy="6.5" r="1.4" fill="#c8102e"/></svg>
<div class="a at" style="left:1040px;top:959.5px;width:65px;text-align:center;font-size:9.5px;color:#2a2a2a">JJKemedia</div>
<div class="a" style="left:1108px;top:937px;width:65px;height:37px;background:linear-gradient(#cdced0 0,#cdced0 50%,#bdbec1 50%,#bdbec1 100%);border:1px solid #9c9da1"></div>
<svg class="a" style="left:1134.0px;top:940px" width="13" height="13" viewBox="0 0 13 13"><rect x="1" y="1" width="11" height="11" fill="#c8102e"/><path d="M6.5 2.5l4 2v4l-4 2-4-2v-4z" fill="#fff"/><path d="M2.5 4.5l4 2 4-2M6.5 6.5v4" stroke="#c8102e" stroke-width=".7" fill="none"/></svg>
<div class="a at" style="left:1108px;top:959.5px;width:65px;text-align:center;font-size:9.5px;color:#2a2a2a">Media Paket</div>
<svg class="a" style="left:1295px;top:929px" width="19" height="41" viewBox="0 0 19 41"><path d="M19 0H1v28l18 13z" fill="#636466"/><rect x="4.5" y="6" width="12" height="12" rx="2.5" fill="#1b1d2a"/><ellipse cx="10.5" cy="12" rx="4" ry="3.6" fill="none" stroke="#ddd" stroke-width="1.1"/><path d="M7.5 12h6" stroke="#ddd" stroke-width="1.1"/></svg>
<div class="a" style="left:306px;top:990px;width:1007px;height:20px;background:#d5d6d9"></div>
<div class="a at" style="left:313px;top:995px;font-size:9.5px;color:#222">Benutzer: Jjkts Jjkts&nbsp; (jjkts)</div>
<div class="a at" style="left:1106px;top:995px;width:200px;text-align:right;font-size:9.5px;color:#222">© 2025 JJK GmbH</div>
<div class="a" style="left:305px;top:1010px;width:1009px;height:32px;background:#0a0a0a"></div>
<!--/APP-->
<!--TB-->
<svg class="a" style="left:318px;top:1020px" width="13" height="12" viewBox="0 0 13 12"><path d="M0 1.8l5.2-.7v4.6H0zM6 1L13 0v5.7H6zM0 6.4h5.2v4.7L0 10.4zM6 6.4h7V12l-7-1z" fill="#fff"/></svg>
<svg class="a" style="left:356px;top:1019px" width="14" height="14" viewBox="0 0 14 14"><circle cx="8.5" cy="5.5" r="4.5" fill="none" stroke="#fff" stroke-width="1.3"/><path d="M5.3 8.7L1 13" stroke="#fff" stroke-width="1.5"/></svg>
<svg class="a" style="left:391px;top:1018px" width="17" height="17" viewBox="0 0 17 17"><path d="M1 2h12M1 15h12M3 4h9v9H3z" fill="none" stroke="#fff" stroke-width="1.3"/><path d="M15 2v3M15 7v8" stroke="#fff" stroke-width="1.3"/></svg>
<svg class="a" style="left:431px;top:1018px" width="18" height="16" viewBox="0 0 18 16"><path d="M0 1h7l2 2h9v13H0z" fill="#e8b73a"/><rect x="0" y="5" width="18" height="11" fill="#f8d775"/><rect x="5" y="11" width="8" height="3" fill="#2a8ad4"/></svg>
<svg class="a" style="left:470px;top:1017px" width="19" height="18" viewBox="0 0 19 18"><rect x="7" y="3" width="12" height="12" fill="#cfe4f8"/><path d="M9 5l5 4 5-4" stroke="#0a64b4" fill="none"/><path d="M0 2l10-2v18L0 16z" fill="#0a64b4"/><ellipse cx="5" cy="9" rx="2.6" ry="3.3" fill="none" stroke="#fff" stroke-width="1.4"/></svg>
<svg class="a" style="left:507px;top:1015px" width="20" height="21" viewBox="0 0 20 21"><rect x="1" y="1" width="18" height="19" rx="2.5" fill="#d9333f" stroke="#f2b2b8" stroke-width="1"/><path d="M5 5h4v11H5zM11 5h4v11h-4z" fill="#fff"/><path d="M12 9h2M12 12h2" stroke="#d9333f"/></svg>
<div class="a" style="left:505px;top:1040px;width:24px;height:2px;background:#8fb7e8"></div>
<div class="a" style="left:537px;top:1010px;width:38px;height:32px;background:#2b2b2b"></div>
<svg class="a" style="left:546px;top:1015px" width="20" height="21" viewBox="0 0 20 21"><rect x="1" y="1" width="18" height="19" rx="2.5" fill="#c8102e" stroke="#f2b2b8" stroke-width="1"/><path d="M6 4h6l3 3v10H6z" fill="#fff"/><path d="M8 11l2 2 3.5-4" stroke="#c8102e" stroke-width="1.4" fill="none"/></svg>
<div class="a" style="left:544px;top:1040px;width:24px;height:2px;background:#8fb7e8"></div>
<svg class="a" style="left:1167px;top:1021px" width="12" height="8" viewBox="0 0 12 8"><path d="M1 7l5-5 5 5" fill="none" stroke="#fff" stroke-width="1.2"/></svg>
<svg class="a" style="left:1184px;top:1019px" width="16" height="14" viewBox="0 0 16 14"><rect x="4" y="1" width="11" height="8" fill="none" stroke="#fff" stroke-width="1.1"/><rect x="1" y="4" width="7" height="6" fill="#0a0a0a" stroke="#fff" stroke-width="1.1"/><path d="M3 13h5M5 10v3" stroke="#fff"/></svg>
<svg class="a" style="left:1203px;top:1019px" width="16" height="14" viewBox="0 0 16 14"><path d="M1 5h3l4-3.5v11L4 9H1z" fill="none" stroke="#fff" stroke-width="1.1"/><circle cx="12.5" cy="10" r="3" fill="#e33"/><path d="M11 8.5l3 3M14 8.5l-3 3" stroke="#fff" stroke-width=".9"/></svg>
<div class="a at" style="left:1215px;top:1013px;width:60px;text-align:center;font-size:9px;color:#fff;line-height:13px">14:04<br>09.12.2025</div>
<svg class="a" style="left:1281px;top:1018px" width="16" height="16" viewBox="0 0 16 16"><path d="M1 1.5h14v10H9l-3 3v-3H1z" fill="none" stroke="#fff" stroke-width="1.1"/></svg>
<div class="a" style="left:1305px;top:1010px;width:1px;height:32px;background:#444"></div>
<div class="a" style="left:5px;top:1042px;width:1610px;height:40px;background:linear-gradient(90deg,#d6dde9,#dfe4ef 40%,#dce2ed)"></div>
<svg class="a" style="left:16px;top:1049px" width="30" height="22" viewBox="0 0 30 22"><path d="M5 17c-3 0-4.5-2-4-4s2.5-3 4-2.5C6 7 9 6 11.5 7.5 14 5 19 6 19 10.5c2.5 0 3.5 2 3 3.8S20 17 19 17z" fill="#cfe3fb" stroke="#9cc3ee" stroke-width=".8"/></svg>
<div class="a" style="left:27px;top:1046px;width:14px;height:14px;background:#c42020;border-radius:50%;border:1px solid #f1c6c6"></div>
<div class="a at" style="left:27px;top:1047.5px;width:14px;text-align:center;font-size:8.5px;color:#fff">1</div>
<div class="a at" style="left:45px;top:1049px;font-size:10px;font-weight:bold;color:#222">12°C</div>
<div class="a at" style="left:45px;top:1062px;font-size:10px;color:#444">Bewölkt</div>
<svg class="a" style="left:336px;top:1052px" width="21" height="21" viewBox="0 0 21 21"><rect x="0" y="0" width="10" height="10" fill="#2aa3ef"/><rect x="11" y="0" width="10" height="10" fill="#1f95e8"/><rect x="0" y="11" width="10" height="10" fill="#1a8ae0"/><rect x="11" y="11" width="10" height="10" fill="#1480d8"/></svg>
<div class="a" style="left:368px;top:1049px;width:182px;height:25px;background:#f4f6fb;border-radius:13px;border:1px solid #e3e7ef"></div>
<svg class="a" style="left:375px;top:1054px" width="15" height="15" viewBox="0 0 15 15"><circle cx="6" cy="6" r="4.6" fill="none" stroke="#222" stroke-width="1.6"/><path d="M9.5 9.5l4 4" stroke="#222" stroke-width="1.8"/></svg>
<div class="a at" style="left:398px;top:1056px;font-size:12px;color:#555">Suche</div>
<div class="a" style="left:1258px;top:1046px;width:33px;height:33px;background:#eef1f7;border-radius:4px"></div>
<svg class="a" style="left:561px;top:1052px" width="20" height="20" viewBox="0 0 20 20"><rect x="2" y="3" width="14" height="13" fill="#f4f4f4"/><rect x="2" y="8" width="10" height="10" fill="#1f1f1f"/><rect x="6" y="3" width="12" height="10" fill="#dcdcdc"/></svg>
<svg class="a" style="left:599px;top:1052px" width="20" height="20" viewBox="0 0 20 20"><path d="M1 3h7l2 2h9v13H1z" fill="#e8b73a"/><rect x="1" y="7" width="18" height="11" fill="#f8d775"/><rect x="6" y="13" width="9" height="3" fill="#1e88d6"/></svg>
<svg class="a" style="left:636px;top:1052px" width="20" height="20" viewBox="0 0 20 20"><circle cx="10" cy="10" r="9" fill="#db4437"/><path d="M10 10L2.2 14.5A9 9 0 0 0 10 19z" fill="#0f9d58"/><path d="M10 10l7.8 4.5A9 9 0 0 1 10 19z" fill="#f4b400"/><path d="M10 10L17.8 14.5A9 9 0 0 0 19 10z" fill="#f4b400"/><circle cx="10" cy="10" r="4.5" fill="#fff"/><circle cx="10" cy="10" r="3.4" fill="#4285f4"/></svg>
<div class="a" style="left:643px;top:1075px;width:6px;height:2px;background:#6e7380;border-radius:1px"></div>
<svg class="a" style="left:673px;top:1052px" width="20" height="20" viewBox="0 0 20 20"><rect x="6" y="3" width="13" height="14" rx="1" fill="#28a8ea"/><rect x="6" y="10" width="13" height="7" fill="#0364b8"/><rect x="1" y="5" width="10" height="10" rx="1" fill="#0a5fb0"/><ellipse cx="6" cy="10" rx="2.3" ry="2.8" fill="none" stroke="#fff" stroke-width="1.4"/></svg>
<div class="a" style="left:680px;top:1075px;width:6px;height:2px;background:#6e7380;border-radius:1px"></div>
<svg class="a" style="left:710px;top:1052px" width="20" height="20" viewBox="0 0 20 20"><circle cx="14" cy="5" r="2.5" fill="#7b83eb"/><rect x="11" y="8" width="8" height="8" rx="2" fill="#7b83eb"/><circle cx="9" cy="4.5" r="3" fill="#5059c9"/><rect x="4" y="8" width="10" height="11" rx="2" fill="#5059c9"/><rect x="1" y="8" width="9" height="9" rx="1" fill="#4b53bc"/><path d="M3 10.5h5M5.5 10.5v5" stroke="#fff" stroke-width="1.4"/></svg>
<div class="a" style="left:717px;top:1075px;width:6px;height:2px;background:#6e7380;border-radius:1px"></div>
<svg class="a" style="left:747px;top:1052px" width="20" height="20" viewBox="0 0 20 20"><path d="M3 3l9-2v12L3 11z" fill="#1565c0"/><rect x="9" y="6" width="9" height="7" fill="#90caf9"/><circle cx="14" cy="15" r="4" fill="#8bc34a" stroke="#fff" stroke-width="1"/></svg>
<div class="a" style="left:754px;top:1075px;width:6px;height:2px;background:#6e7380;border-radius:1px"></div>
<svg class="a" style="left:784px;top:1052px" width="20" height="20" viewBox="0 0 20 20"><rect x="1" y="1" width="18" height="18" rx="3" fill="#f7a23b"/><path d="M4 7h12M4 11h12" stroke="#fde2bd" stroke-width="1.3"/></svg>
<div class="a" style="left:791px;top:1075px;width:6px;height:2px;background:#6e7380;border-radius:1px"></div>
<svg class="a" style="left:821px;top:1052px" width="20" height="20" viewBox="0 0 20 20"><rect x="0" y="0" width="20" height="20" fill="#fff"/><path d="M3 3h7l-2 9M9 3l7 10M16 3l-7 10" stroke="#1a3d8a" stroke-width="2" fill="none"/><path d="M2 7h10" stroke="#d02424" stroke-width="1.5"/></svg>
<svg class="a" style="left:858px;top:1052px" width="20" height="20" viewBox="0 0 20 20"><rect x="1" y="1" width="18" height="18" rx="3" fill="#d41f1f"/><path d="M5 15c2-4 4-9 5-11 1 3 3 7 6 9-3-1-8 0-11 2z" fill="none" stroke="#fff" stroke-width="1.3"/></svg>
<svg class="a" style="left:895px;top:1052px" width="20" height="20" viewBox="0 0 20 20"><rect x="1" y="1" width="18" height="18" rx="3" fill="#001e36"/><text x="10" y="14" font-size="9" font-family="Liberation Sans" font-weight="bold" fill="#31a8ff" text-anchor="middle">Ps</text></svg>
<div class="a" style="left:902px;top:1075px;width:6px;height:2px;background:#6e7380;border-radius:1px"></div>
<svg class="a" style="left:932px;top:1052px" width="20" height="20" viewBox="0 0 20 20"><rect x="1" y="1" width="18" height="18" rx="3" fill="#49021f"/><text x="10" y="14" font-size="9" font-family="Liberation Sans" font-weight="bold" fill="#ff3366" text-anchor="middle">Id</text></svg>
<div class="a" style="left:939px;top:1075px;width:6px;height:2px;background:#6e7380;border-radius:1px"></div>
<svg class="a" style="left:969px;top:1052px" width="20" height="20" viewBox="0 0 20 20"><rect x="1" y="1" width="18" height="18" rx="3" fill="#330000"/><text x="10" y="14" font-size="9" font-family="Liberation Sans" font-weight="bold" fill="#ff9a00" text-anchor="middle">Ai</text></svg>
<svg class="a" style="left:1005px;top:1052px" width="20" height="20" viewBox="0 0 20 20"><rect x="5" y="2" width="14" height="16" rx="2" fill="#41a5ee"/><rect x="5" y="10" width="14" height="8" fill="#185abd"/><rect x="1" y="7" width="9" height="9" rx="1" fill="#185abd"/><text x="5.5" y="14.5" font-size="7" font-family="Liberation Sans" font-weight="bold" fill="#fff" text-anchor="middle">W</text></svg>
<svg class="a" style="left:1042px;top:1052px" width="20" height="20" viewBox="0 0 20 20"><rect x="5" y="2" width="14" height="16" rx="2" fill="#33c481"/><rect x="5" y="10" width="14" height="8" fill="#107c41"/><rect x="1" y="7" width="9" height="9" rx="1" fill="#107c41"/><text x="5.5" y="14.5" font-size="7" font-family="Liberation Sans" font-weight="bold" fill="#fff" text-anchor="middle">X</text></svg>
<svg class="a" style="left:1079px;top:1052px" width="20" height="20" viewBox="0 0 20 20"><rect x="5" y="2" width="14" height="16" rx="2" fill="#ca64ea"/><rect x="5" y="10" width="14" height="8" fill="#7719aa"/><rect x="1" y="7" width="9" height="9" rx="1" fill="#7719aa"/><text x="5.5" y="14.5" font-size="7" font-family="Liberation Sans" font-weight="bold" fill="#fff" text-anchor="middle">N</text></svg>
<div class="a" style="left:1086px;top:1075px;width:6px;height:2px;background:#6e7380;border-radius:1px"></div>
<svg class="a" style="left:1116px;top:1052px" width="20" height="20" viewBox="0 0 20 20"><path d="M10 2c5 0 9 3 9 7 0 3-3 3-4 3-2 0-2 2-1 3 1 2-1 4-4 4C5 19 1 15 1 10S5 2 10 2z" fill="#5fb3e6"/><circle cx="6" cy="8" r="1.6" fill="#f44"/><circle cx="10" cy="5.5" r="1.6" fill="#fc3"/><circle cx="14" cy="7" r="1.6" fill="#4c4"/><path d="M12 18l6-10" stroke="#8a6a3a" stroke-width="2"/></svg>
<svg class="a" style="left:1153px;top:1052px" width="20" height="20" viewBox="0 0 20 20"><rect x="2" y="2" width="9" height="9" fill="none" stroke="#d33" stroke-width="1.4" stroke-dasharray="2 1.5"/><circle cx="11" cy="15" r="2" fill="none" stroke="#39f" stroke-width="1.4"/><circle cx="16" cy="12" r="2" fill="none" stroke="#39f" stroke-width="1.4"/><path d="M8 7l4 6M16 4l-4 9" stroke="#39f" stroke-width="1.3"/></svg>
<svg class="a" style="left:1190px;top:1052px" width="20" height="20" viewBox="0 0 20 20"><rect x="2" y="3" width="15" height="16" fill="#f1f1d8" stroke="#8bb04a"/><rect x="2" y="14" width="15" height="5" fill="#6cb33f"/><path d="M5 9v4M8 8v5M11 10v3" stroke="#444"/><path d="M11 12l7-10" stroke="#e2c02c" stroke-width="2"/></svg>
<svg class="a" style="left:1228px;top:1052px" width="20" height="20" viewBox="0 0 20 20"><rect x="1" y="1" width="18" height="18" rx="3" fill="#0b1d4a"/><circle cx="10" cy="10" r="7" fill="#fff"/><path d="M4.5 10l3-2.5v1.5h5V7.5l3 2.5-3 2.5V11h-5v1.5z" fill="#0b1d4a"/></svg>
<div class="a" style="left:1235px;top:1075px;width:6px;height:2px;background:#6e7380;border-radius:1px"></div>
<svg class="a" style="left:1265px;top:1052px" width="20" height="20" viewBox="0 0 20 20"><rect x="1" y="1" width="18" height="18" rx="3" fill="#0b1d4a"/><circle cx="10" cy="10" r="7" fill="#fff"/><path d="M4.5 10l3-2.5v1.5h5V7.5l3 2.5-3 2.5V11h-5v1.5z" fill="#0b1d4a"/></svg>
<div class="a" style="left:1267px;top:1076px;width:16px;height:3px;background:#1b6fd0;border-radius:2px"></div>
<div class="a" style="left:720px;top:1047px;width:13px;height:13px;background:#d02424;border-radius:50%;border:1px solid #f1c6c6"></div>
<div class="a at" style="left:720px;top:1048px;width:13px;text-align:center;font-size:8.5px;color:#fff">1</div>
<svg class="a" style="left:1385px;top:1058px" width="12" height="8" viewBox="0 0 12 8"><path d="M1 7l5-5 5 5" fill="none" stroke="#333" stroke-width="1.4"/></svg>
<svg class="a" style="left:1409px;top:1055px" width="17" height="11" viewBox="0 0 17 11"><path d="M4 10C1.5 10 .5 8.5 1 7s1.8-2 3-1.8C4.8 2.5 7.5 1.5 9.5 2.5 11 1 15 1.5 15.5 5c1.3.3 1.8 1.5 1.3 3S15 10 14 10z" fill="#1a73e8"/></svg>
<div class="a" style="left:1432px;top:1045px;width:26px;height:34px;background:#1266c6;border-radius:3px;border:1px solid #5a9be0"></div>
<svg class="a" style="left:1438px;top:1051px" width="14" height="20" viewBox="0 0 14 20"><rect x="4.5" y="1" width="5" height="10" rx="2.5" fill="#fff"/><path d="M2 8a5 5 0 0 0 10 0M7 13v3" stroke="#fff" stroke-width="1.4" fill="none"/></svg>
<svg class="a" style="left:1463px;top:1054px" width="16" height="14" viewBox="0 0 16 14"><path d="M1 5a10 10 0 0 1 14 0M3.5 7.5a6.5 6.5 0 0 1 9 0M6 10a3 3 0 0 1 4 0" fill="none" stroke="#222" stroke-width="1.2"/><circle cx="8" cy="12" r="1" fill="#222"/></svg>
<svg class="a" style="left:1482px;top:1054px" width="16" height="14" viewBox="0 0 16 14"><path d="M1 5h3l4-3.5v11L4 9H1z" fill="none" stroke="#222" stroke-width="1.1"/><path d="M10.5 4.5a3.5 3.5 0 0 1 0 5M12.5 2.5a6 6 0 0 1 0 9" fill="none" stroke="#222" stroke-width="1.1"/></svg>
<svg class="a" style="left:1504px;top:1054px" width="17" height="13" viewBox="0 0 17 13"><rect x="1" y="3" width="13" height="8" rx="1" fill="#222"/><rect x="14" y="5" width="2" height="4" fill="#222"/><path d="M3 1l2 3" stroke="#222" stroke-width="1.2"/></svg>
<div class="a at" style="left:1520px;top:1049px;width:61px;text-align:right;font-size:10px;color:#222;line-height:13.5px">14:04<br>09.12.2025</div>
<svg class="a" style="left:1586px;top:1053px" width="15" height="17" viewBox="0 0 15 17"><path d="M7.5 2a4.5 4.5 0 0 1 4.5 4.5v4l2 2.5H1l2-2.5v-4A4.5 4.5 0 0 1 7.5 2z" fill="#222"/><path d="M6 15h3" stroke="#222" stroke-width="1.5"/><rect x="6" y="5" width="4" height="5" fill="#fff"/></svg>
<!--/TB-->
<!--TILES-->
<svg class="a" style="left:1619px;top:208px;border-radius:4px" width="296" height="164" viewBox="0 0 296 164"><defs><clipPath id="c208"><rect width="296" height="164" rx="4"/></clipPath><filter id="b208" x="-10%" y="-10%" width="120%" height="120%"><feGaussianBlur stdDeviation="1.6"/></filter><filter id="B208" x="-20%" y="-20%" width="140%" height="140%"><feGaussianBlur stdDeviation="8"/></filter></defs><g clip-path="url(#c208)"><rect width="296" height="164" fill="#d6d6d4"/>
<g filter="url(#b208)">
<rect x="0" y="0" width="14" height="164" fill="#9a9a9a"/>
<rect x="2" y="12" width="9" height="35" fill="#555"/>
<rect x="2" y="52" width="9" height="55" fill="#666"/>
<path d="M14 0L104 70V164H14z" fill="#d2d2d0"/>
<rect x="104" y="68" width="192" height="80" fill="#dcdcd8"/>
<rect x="163" y="79" width="62" height="42" fill="#f4f6f6"/>
<rect x="193" y="81" width="30" height="40" fill="#9aa46a"/>
<rect x="234" y="80" width="20" height="42" fill="#6e7a50"/>
<rect x="277" y="77" width="19" height="77" fill="#eeeeec"/>
<rect x="104" y="146" width="192" height="18" fill="#c8c4bc"/>
<path d="M0 0H296V60L278 66L104 70L24 0z" fill="#7a6650"/>
<path d="M28 0L104 70" stroke="#a8957a" stroke-width="5"/>
<path d="M214 68L296 16" stroke="#9c8668" stroke-width="4"/>
<path d="M44 10H296M58 22H296M72 34H296M86 46H296M98 58H290" stroke="#5e4c3a" stroke-width="1.3"/>
<rect x="54" y="57" width="27" height="56" fill="#262626"/>
<rect x="9" y="123" width="90" height="41" fill="#3a3030"/>
<rect x="215" y="122" width="32" height="26" fill="#1e2238"/>
<rect x="222" y="125" width="18" height="10" fill="#c8c8c8"/>
</g>
<g filter="url(#b208)">
<path d="M75 164C76 122 88 100 120 93L150 90L178 95C198 102 203 125 203 164z" fill="#2c3140"/>
<path d="M138 98L145 164H175L168 102z" fill="#141414"/>
<path d="M100 120L110 164M185 110L190 164" stroke="#4a5468" stroke-width="3"/>
<ellipse cx="148" cy="72" rx="18" ry="27" fill="#cbb0a0"/>
<ellipse cx="150" cy="70" rx="12" ry="18" fill="#d8c4b8"/>
<path d="M130 60C130 47 139 45 148 45S166 48 165 60C160 52 138 52 130 60z" fill="#4a3c36"/>
<rect x="132" y="66" width="33" height="4" fill="#6a5048" opacity=".6"/>
</g></g></svg>
<div class="a" style="left:1630px;top:332px;width:131px;height:28px;border-radius:4px;background:rgba(20,20,20,.6)"></div>
<div class="a tname2" style="left:1637px;top:337px">Ralf Berti (Extern)</div>
<svg class="a" style="left:1619px;top:376px;border-radius:4px" width="296" height="165" viewBox="0 0 296 165"><defs><clipPath id="c376"><rect width="296" height="165" rx="4"/></clipPath><filter id="b376" x="-10%" y="-10%" width="120%" height="120%"><feGaussianBlur stdDeviation="1.6"/></filter><filter id="B376" x="-20%" y="-20%" width="140%" height="140%"><feGaussianBlur stdDeviation="8"/></filter></defs><g clip-path="url(#c376)"><rect width="296" height="165" fill="#3a2418"/>
<g filter="url(#b376)">
<rect x="-10" y="-10" width="316" height="36" fill="#3e2419"/>
<path d="M0 8H296M0 16H296" stroke="#4a2e22" stroke-width="2"/>
<rect x="-10" y="26" width="125" height="150" fill="#2a1812"/>
<rect x="115" y="26" width="191" height="150" fill="#50301f"/>
<rect x="195" y="78" width="111" height="22" fill="#80583f"/>
<rect x="195" y="100" width="111" height="70" fill="#34221a"/>
<path d="M195 112H296M195 124H296M195 136H296" stroke="#4a3024" stroke-width="2"/>
<rect x="262" y="124" width="44" height="46" fill="#a6a4a4"/>
<path d="M74 72C74 64 95 62 116 66V125H78z" fill="#1a161a"/>
<path d="M35 175C40 152 70 145 110 145H200C230 145 245 158 245 175z" fill="#2c3038"/>
</g>
<g filter="url(#b376)">
<ellipse cx="153" cy="98" rx="40" ry="70" fill="#c9a690"/>
<ellipse cx="151" cy="62" rx="33" ry="30" fill="#dcc2ae"/>
<ellipse cx="194" cy="95" rx="5" ry="12" fill="#b8907a"/>
<path d="M114 112C116 145 130 170 153 170S190 145 192 112C180 126 126 126 114 112z" fill="#8c6c58"/>
</g>
<rect x="107" y="75" width="32" height="24" rx="10" fill="none" stroke="#3a3033" stroke-width="2.4"/>
<rect x="148" y="77" width="44" height="25" rx="11" fill="none" stroke="#3a3033" stroke-width="2.4"/>
<path d="M139 80h9" stroke="#3a3033" stroke-width="2"/>
<circle cx="125" cy="86" r="2" fill="#5a6a6a"/><circle cx="162" cy="88" r="2" fill="#5a6a6a"/></g></svg>
<div class="a" style="left:1631px;top:501px;width:224px;height:28px;border-radius:4px;background:rgba(20,20,20,.6)"></div>
<div class="a tname2" style="left:1638px;top:506px">Norbert Kutyik (Nicht überprüft)</div>
<svg class="a" style="left:1619px;top:545px;border-radius:4px" width="296" height="165" viewBox="0 0 296 165"><defs><clipPath id="c545"><rect width="296" height="165" rx="4"/></clipPath><filter id="b545" x="-10%" y="-10%" width="120%" height="120%"><feGaussianBlur stdDeviation="1.6"/></filter><filter id="B545" x="-20%" y="-20%" width="140%" height="140%"><feGaussianBlur stdDeviation="8"/></filter></defs><g clip-path="url(#c545)"><rect width="296" height="165" fill="#a29c96"/>
<g filter="url(#b545)">
<rect x="0" y="0" width="296" height="5" fill="#7a746e"/>
<rect x="0" y="5" width="200" height="110" fill="#a8a29c"/>
<rect x="0" y="38" width="200" height="2" fill="#958f89"/>
<rect x="80" y="5" width="1.5" height="100" fill="#958f89"/>
<rect x="125" y="5" width="1.5" height="100" fill="#958f89"/>
<rect x="196" y="5" width="40" height="125" fill="#7a6a5a"/>
<rect x="236" y="0" width="32" height="165" fill="#b89272"/>
<rect x="268" y="0" width="4" height="130" fill="#3a3a38"/>
<rect x="272" y="0" width="15" height="128" fill="#c4ccb4"/>
<rect x="287" y="0" width="9" height="165" fill="#3a3430"/>
<rect x="236" y="123" width="60" height="42" fill="#a47c5a"/>
<rect x="253" y="99" width="34" height="29" fill="#b0aeac"/>
<rect x="248" y="98" width="12" height="20" fill="#2e3a34"/>
<rect x="0" y="77" width="23" height="28" fill="#6a8058"/>
<rect x="8" y="96" width="34" height="38" fill="#d8d2ca"/>
<rect x="72" y="108" width="60" height="15" fill="#6e6c6a"/>
<rect x="92" y="88" width="22" height="22" fill="#7a6a54"/>
<rect x="115" y="92" width="20" height="16" fill="#c8c4be"/>
<rect x="0" y="134" width="236" height="31" fill="#8e8a84"/>
</g>
<g filter="url(#b545)">
<path d="M100 165C102 122 118 104 150 102H180C214 106 228 127 230 165z" fill="#3e4c68"/>
<path d="M130 120L140 165M200 120L195 165" stroke="#5a6a88" stroke-width="3"/>
<path d="M150 102L163 128L180 102z" fill="#2a2e3a"/>
<rect x="152" y="120" width="12" height="9" fill="#c8a830"/>
<ellipse cx="164" cy="74" rx="23" ry="36" fill="#c9a38c"/>
<path d="M141 66C138 44 150 34 165 34S190 42 189 62C186 52 178 46 165 46S146 52 141 66z" fill="#34302c"/>
<path d="M150 100C155 110 172 110 178 100" stroke="#8a6a58" stroke-width="4" fill="none"/>
</g></g></svg>
<div class="a" style="left:1630px;top:670px;width:199px;height:28px;border-radius:4px;background:rgba(20,20,20,.6)"></div>
<div class="a tname2" style="left:1637px;top:675px">Stollenwerk, Michael (Extern)</div>
<svg class="a" style="left:1619px;top:714px;border-radius:4px" width="296" height="164" viewBox="0 0 296 164"><defs><clipPath id="c714"><rect width="296" height="164" rx="4"/></clipPath><filter id="b714" x="-10%" y="-10%" width="120%" height="120%"><feGaussianBlur stdDeviation="1.6"/></filter><filter id="B714" x="-20%" y="-20%" width="140%" height="140%"><feGaussianBlur stdDeviation="8"/></filter></defs><g clip-path="url(#c714)"><rect width="296" height="164" fill="#3a4a40"/>
<g filter="url(#b714)">
<rect x="-10" y="-10" width="316" height="45" fill="#a6cbeb"/>
<rect x="30" y="4" width="60" height="5" fill="#dce6f0"/>
<rect x="150" y="5" width="90" height="4" fill="#d8e2ec"/>
<path d="M-10 30L60 24L150 18L230 13L306 10V174H-10z" fill="#6e5a4c"/>
<path d="M-10 42L80 34L150 28L306 22V174H-10z" fill="#7c6250"/>
<path d="M-10 55L100 44L306 36V174H-10z" fill="#5a6a3c"/>
<path d="M-10 68L120 58L306 50V174H-10z" fill="#4a5632"/>
<path d="M10 38L40 70M30 34L65 78M55 30L95 78M80 27L110 70M200 22L240 68M225 20L265 62M250 18L285 55M270 16L300 45" stroke="#7e604c" stroke-width="4" opacity=".5"/>
<path d="M20 45L50 80M45 40L80 85M70 36L100 82M210 32L250 78M240 28L275 70M262 25L296 60" stroke="#3a4628" stroke-width="3" opacity=".5"/>
<path d="M-10 78H85L125 95L115 135L-10 135z" fill="#2d5a86"/>
<path d="M-10 100H100L122 140L-10 145z" fill="#23496e"/>
<path d="M185 92L306 86V174H185z" fill="#2c3424"/>
<path d="M192 106L306 100V124L198 128z" fill="#6e684a"/>
<path d="M-10 140H70L55 174H-10z" fill="#1c3a58"/>
</g>
<g filter="url(#b714)">
<path d="M62 174C65 132 90 112 125 108H185C225 112 248 135 254 174z" fill="#121212"/>
<ellipse cx="153" cy="76" rx="31" ry="44" fill="#c2aa96"/>
<path d="M122 66C118 38 136 23 158 23S194 36 190 64C186 50 174 42 158 42S128 50 122 66z" fill="#4a4844"/>
<path d="M124 96C128 116 142 124 155 124S180 114 184 96C172 104 138 104 124 96z" fill="#7e746c"/>
<rect x="186" y="62" width="10" height="30" rx="4" fill="#262626"/>
</g>
<rect x="120" y="66" width="28" height="22" rx="3" fill="none" stroke="#4e4a48" stroke-width="3"/>
<rect x="152" y="64" width="32" height="24" rx="3" fill="none" stroke="#4e4a48" stroke-width="3"/></g><rect x="3.5" y="3.5" width="289" height="157" rx="4" fill="none" stroke="#f0f0f8" stroke-width="1"/><rect x="1.6" y="1.6" width="292.8" height="160.8" rx="6" fill="none" stroke="#5b5fc0" stroke-width="3.2"/></svg>
<div class="a" style="left:1630px;top:838px;width:154px;height:28px;border-radius:4px;background:rgba(20,20,20,.6)"></div>
<div class="a tname2" style="left:1637px;top:843px">Sven Drygala (Extern)</div>
<svg class="a" style="left:1619px;top:883px;border-radius:4px" width="296" height="164" viewBox="0 0 296 164"><defs><clipPath id="c883"><rect width="296" height="164" rx="4"/></clipPath><filter id="b883" x="-10%" y="-10%" width="120%" height="120%"><feGaussianBlur stdDeviation="1.6"/></filter><filter id="B883" x="-20%" y="-20%" width="140%" height="140%"><feGaussianBlur stdDeviation="8"/></filter></defs><g clip-path="url(#c883)"><rect width="296" height="164" fill="#c4c6c8"/>
<g filter="url(#B883)">
<rect x="-30" y="-30" width="230" height="60" fill="#7c7e82"/>
<rect x="200" y="-30" width="126" height="45" fill="#c8c8ca"/>
<rect x="-30" y="30" width="230" height="75" fill="#cacccc"/>
<rect x="60" y="40" width="120" height="55" fill="#dadcdc"/>
<rect x="180" y="15" width="146" height="100" fill="#f4f4f4"/>
<rect x="240" y="5" width="16" height="105" fill="#a8aaae"/>
<rect x="-30" y="100" width="230" height="40" fill="#909090"/>
<rect x="5" y="100" width="75" height="38" fill="#a88e68"/>
<rect x="-30" y="136" width="230" height="58" fill="#c4c4c4"/>
<rect x="200" y="112" width="126" height="30" fill="#a4a4a4"/>
<rect x="200" y="140" width="126" height="54" fill="#dcdcdc"/>
</g>
<g filter="url(#b883)">
<path d="M66 174C70 130 90 110 116 104H194C220 110 236 135 240 174z" fill="#4e5666"/>
<path d="M104 174L110 106H194L204 174z" fill="#181c28"/>
<path d="M110 112C106 75 114 33 150 31S196 62 200 118L178 110H130z" fill="#34241e"/>
<path d="M178 70C188 88 194 104 204 120L190 118z" fill="#4e3228"/>
<ellipse cx="151" cy="75" rx="20" ry="28" fill="#a88676"/>
<path d="M131 62C134 46 158 40 171 56C158 49 144 51 131 62z" fill="#34241e"/>
</g></g></svg>
<div class="a" style="left:15px;top:1095px;width:215px;height:30px;border-radius:4px;background:#7a7a7a"></div>
<div class="a" style="left:22px;top:1101px;font-size:14.5px;color:#fff;white-space:nowrap">Sven Drygala (Extern)</div>
<div class="a" style="left:172px;top:1110px;width:14px;height:1.5px;background:#a8a8a8"></div>
<div class="a" style="left:200px;top:1109.5px;width:16px;height:1px;background:#fff"></div>
<div class="a" style="left:207.5px;top:1102px;width:1px;height:16px;background:#fff"></div>
<!--/TILES-->
</body></html>
